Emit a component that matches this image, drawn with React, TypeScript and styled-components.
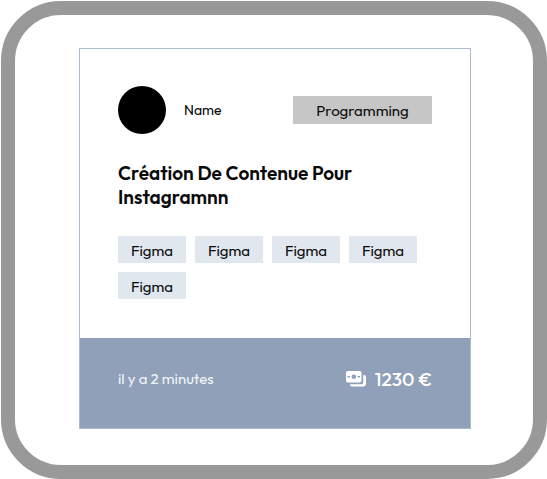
import React from "react";
import styled, { createGlobalStyle } from "styled-components";

const GlobalStyle = createGlobalStyle`
  *, *::before, *::after { box-sizing: border-box; }
  body {
    margin: 0;
    background: #fff;
    color: #0a0a0a;
    font-family: Outfit, Lato, sans-serif;
  }
`;

const Page = styled.main`
  padding: 1px 0 0 1px;
`;

const Frame = styled.div`
  display: flex;
  justify-content: center;
  padding: 33px 23px 36px 25px;
  border: 14px solid #999;
  border-radius: 60px;
  background: #fff;
`;

const Card = styled.article`
  width: 100%;
  max-width: 392px;
  border: 1px solid #a9b9ce;
`;

const Body = styled.div`
  padding: 37px 38px 39px;
`;

const Header = styled.header`
  display: flex;
  align-items: center;
  gap: 18px;
`;

const Avatar = styled.div`
  flex: none;
  width: 48px;
  height: 48px;
  border-radius: 50%;
  background: #000;
`;

const Name = styled.span`
  flex: 1;
  font-size: 14px;
  line-height: 20px;
`;

const Category = styled.span`
  padding: 5px 22px 3px;
  background: #c6c6c6;
  font-size: 15px;
  line-height: 20px;
  min-width: 139px;
  text-align: center;
`;

const Title = styled.h2`
  margin: 27px 0 0;
  font-size: 19px;
  font-weight: 600;
  line-height: 24px;
`;

const Tags = styled.ul`
  display: flex;
  flex-wrap: wrap;
  gap: 9px;
  margin: 27px 0 0;
  padding: 0;
  list-style: none;
`;

const Tag = styled.li`
  min-width: 68px;
  padding: 5px 12px 2px;
  background: #e1e7ef;
  font-size: 15px;
  line-height: 20px;
  text-align: center;
`;

const Footer = styled.footer`
  display: flex;
  align-items: center;
  justify-content: space-between;
  padding: 29px 38px 37px;
  background: #90a0b9;
  color: #fff;
`;

const Time = styled.time`
  color: #f1f4f8;
  font-size: 15px;
  line-height: 24px;
`;

const Price = styled.strong`
  display: flex;
  align-items: center;
  gap: 9px;
  font-size: 19px;
  font-weight: 500;
  line-height: 24px;
`;

const MoneyIcon = () => (
  <svg width="20" height="16" viewBox="0 0 20 16" aria-hidden="true">
    <path
      fill="#fff"
      fillRule="evenodd"
      d="M2 0h11.5a2 2 0 0 1 2 2v7.5a2 2 0 0 1-2 2H2a2 2 0 0 1-2-2V2a2 2 0 0 1 2-2Zm5.8 3.4a2.3 2.3 0 1 0 0 4.6 2.3 2.3 0 0 0 0-4.6ZM1.5 5v1.4H4V5Zm10 0v1.4H14V5Z"
    />
    <path fill="#fff" d="M17.3 4H18a2 2 0 0 1 2 2v6.5a3 3 0 0 1-3 3H6a2 2 0 0 1-2-2v-.3h11.3a2 2 0 0 0 2-2Z" />
  </svg>
);

const tags = ["Figma", "Figma", "Figma", "Figma", "Figma"];

export default function App() {
  return (
    <>
      <GlobalStyle />
      <Page>
        <Frame>
          <Card>
            <Body>
              <Header>
                <Avatar />
                <Name>Name</Name>
                <Category>Programming</Category>
              </Header>
              <Title>Création De Contenue Pour Instagramnn</Title>
              <Tags>
                {tags.map((tag, index) => (
                  <Tag key={index}>{tag}</Tag>
                ))}
              </Tags>
            </Body>
            <Footer>
              <Time>il y a 2 minutes</Time>
              <Price>
                <MoneyIcon />
                1230 €
              </Price>
            </Footer>
          </Card>
        </Frame>
      </Page>
    </>
  );
}
